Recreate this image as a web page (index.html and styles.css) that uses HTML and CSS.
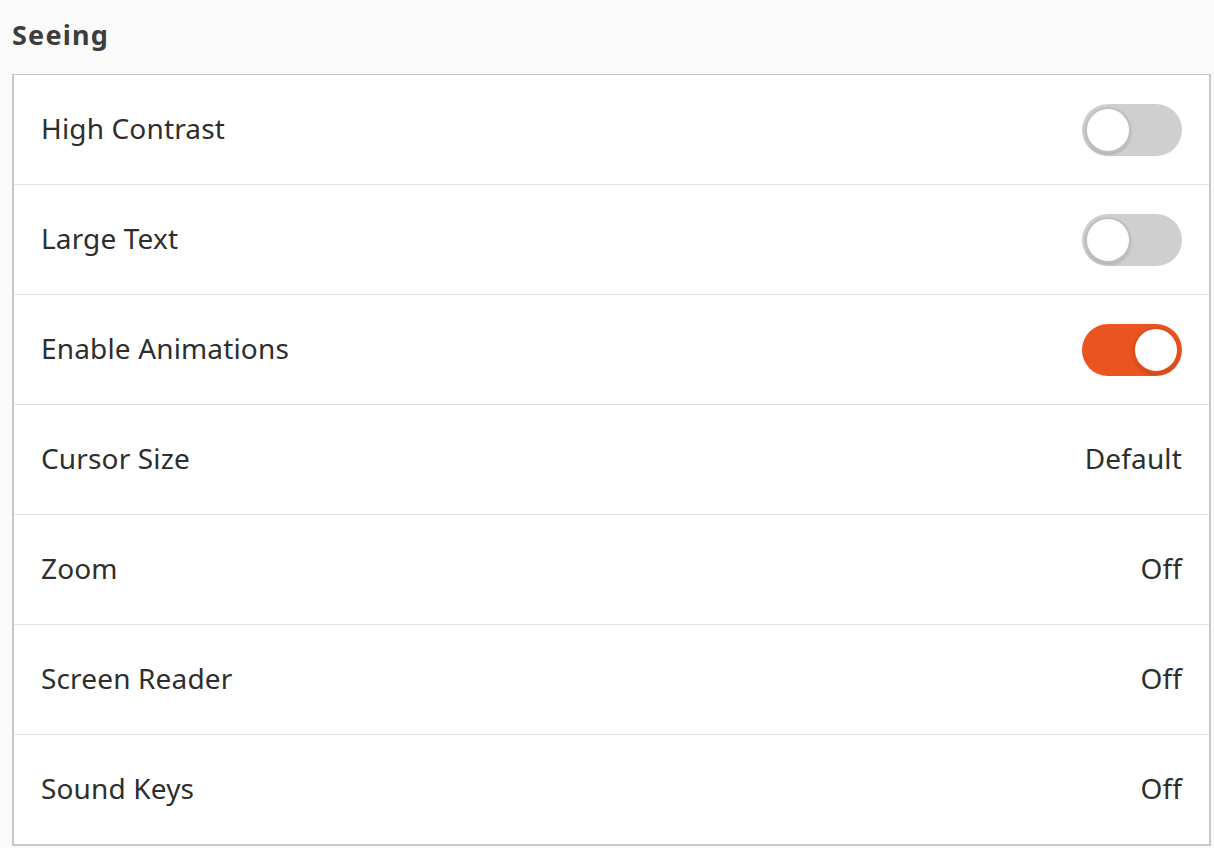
FILE: index.html
```html
<!DOCTYPE html>
<html>
<head>
<meta charset="utf-8">
<link rel="stylesheet" href="styles.css">
</head>
<body>
<div class="page">
  <h2 class="section-title">Seeing</h2>
  <div class="list">
    <div class="row"><span class="label">High Contrast</span><span class="switch"><span class="knob"></span></span></div>
    <div class="row"><span class="label">Large Text</span><span class="switch"><span class="knob"></span></span></div>
    <div class="row"><span class="label">Enable Animations</span><span class="switch on"><span class="knob"></span></span></div>
    <div class="row"><span class="label">Cursor Size</span><span class="value">Default</span></div>
    <div class="row"><span class="label">Zoom</span><span class="value">Off</span></div>
    <div class="row"><span class="label">Screen Reader</span><span class="value">Off</span></div>
    <div class="row"><span class="label">Sound Keys</span><span class="value">Off</span></div>
  </div>
</div>
</body>
</html>
```

FILE: styles.css
```css
html, body {
  margin: 0;
  padding: 0;
  background: #fafafa;
}
.page {
  font-family: "Noto Sans", "DejaVu Sans", sans-serif;
  color: #2e2e2e;
  padding: 0 3px 0 12px;
}
.section-title {
  margin: 0;
  height: 74px;
  display: flex;
  align-items: center;
  font-size: 27px;
  font-weight: bold;
  letter-spacing: 1.2px;
  color: #3d3d3d;
  padding-bottom: 6px;
  box-sizing: border-box;
}
.list {
  background: #ffffff;
  border: 2px solid #c8c8c8;
  border-top-width: 1px;
}
.row {
  height: 109px;
  display: flex;
  align-items: center;
  justify-content: space-between;
  padding: 0 27px 0 27px;
  border-top: 1px solid #e2e2e2;
  font-size: 28px;
  letter-spacing: 0.15px;
}
.row:first-child {
  border-top: none;
}
.label, .value {
  line-height: 1;
  padding-bottom: 3px;
}
.switch {
  width: 100px;
  height: 52px;
  border-radius: 26px;
  background: #cfcfcf;
  position: relative;
  box-sizing: border-box;
}
.knob {
  position: absolute;
  top: 3px;
  left: 3px;
  width: 46px;
  height: 46px;
  border-radius: 50%;
  background: #ffffff;
  box-sizing: border-box;
  border: 2px solid #c0c0c0;
  box-shadow: 0 2px 3px rgba(0,0,0,0.15);
}
.switch.on {
  background: #e95420;
}
.switch.on .knob {
  left: auto;
  right: 3px;
  border-color: #e24f1b;
}
```
